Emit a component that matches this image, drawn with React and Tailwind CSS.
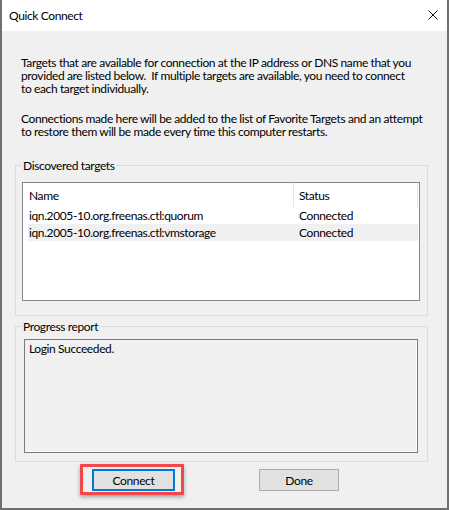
import React from 'react';

const rows = [
  { name: 'iqn.2005-10.org.freenas.ctl:quorum', status: 'Connected', hilite: false },
  { name: 'iqn.2005-10.org.freenas.ctl:vmstorage', status: 'Connected', hilite: true },
];

const GroupBox = ({ label, className, children }) => (
  <div className={`relative border border-[#dcdcdc] ${className}`}>
    <span className="absolute -top-[7px] left-[6px] bg-[#f0f0f0] px-[1px] leading-[13px] text-black">
      {label}
    </span>
    {children}
  </div>
);

const App = () => {
  return (
    <div className="w-[449px] h-[510px] bg-[#f0f0f0] border-x-2 border-b-2 border-[#707070] flex flex-col font-['Lato',sans-serif] text-[12px] tracking-[-0.38px] text-black overflow-hidden">
      {/* Title bar */}
      <div className="h-[31px] shrink-0 bg-white flex items-center justify-between pl-[7px] pr-[9px]">
        <span className="leading-[13px]">Quick Connect</span>
        <svg width="10" height="10" viewBox="0 0 10 10" className="mb-[1px]">
          <path d="M0.5 0.5 L9.5 9.5 M9.5 0.5 L0.5 9.5" stroke="#111" strokeWidth="1" fill="none" />
        </svg>
      </div>

      {/* Body */}
      <div className="flex flex-col pt-[25px]">
        <p className="pl-[19px] leading-[13px] whitespace-nowrap">
          Targets that are available for connection at the IP address or DNS name that you<br />
          provided are listed below.&nbsp; If multiple targets are available, you need to connect<br />
          to each target individually.
        </p>
        <p className="pl-[19px] mt-[17px] leading-[13px] whitespace-nowrap">
          Connections made here will be added to the list of Favorite Targets and an attempt<br />
          to restore them will be made every time this computer restarts.
        </p>

        {/* Discovered targets */}
        <GroupBox label="Discovered targets" className="ml-[13px] mt-[27px] w-[413px] h-[151px] pt-[16px] pl-[6px]">
          <div className="w-[398px] h-[119px] bg-white border border-[#828790]">
            <div className="flex h-[24px] leading-[13px]">
              <div className="w-[271px] flex items-center pl-[6px] border-r border-[#e5e5e5]">Name</div>
              <div className="w-[124px] flex items-center pl-[5px] border-r border-[#e5e5e5]">Status</div>
            </div>
            {rows.map((r) => (
              <div
                key={r.name}
                className={`flex h-[17px] ml-[5px] w-[390px] items-center leading-[13px] ${r.hilite ? 'bg-[#f0f0f0]' : ''}`}
              >
                <div className="w-[266px] pl-[1px] whitespace-nowrap">{r.name}</div>
                <div className="pl-[5px]">{r.status}</div>
              </div>
            ))}
          </div>
        </GroupBox>

        {/* Progress report */}
        <GroupBox label="Progress report" className="ml-[13px] mt-[10px] w-[413px] h-[136px] pt-[12px] pl-[8px]">
          <div className="w-[394px] h-[114px] border border-[#7a7a7a] shadow-[inset_-1px_-1px_0_#ffffff] pl-[4px] pt-[2px] leading-[13px]">
            Login Succeeded.
          </div>
        </GroupBox>

        {/* Buttons */}
        <div className="flex items-start mt-[2px] pl-[78px]">
          <div className="border-[3px] border-[#f2474b] pl-[9px] pr-[6px] pt-[2px] pb-[1px] shadow-[0_2px_4px_rgba(0,0,0,0.35)]">
            <button className="w-[83px] h-[22px] bg-[#e1e1e1] border-2 border-[#0078d7] flex items-center justify-center leading-[13px]">
              Connect
            </button>
          </div>
          <button className="ml-[75px] mt-[5px] w-[80px] h-[22px] bg-[#e1e1e1] border border-[#adadad] flex items-center justify-center leading-[13px]">
            Done
          </button>
        </div>
      </div>
    </div>
  );
};

export default App;
